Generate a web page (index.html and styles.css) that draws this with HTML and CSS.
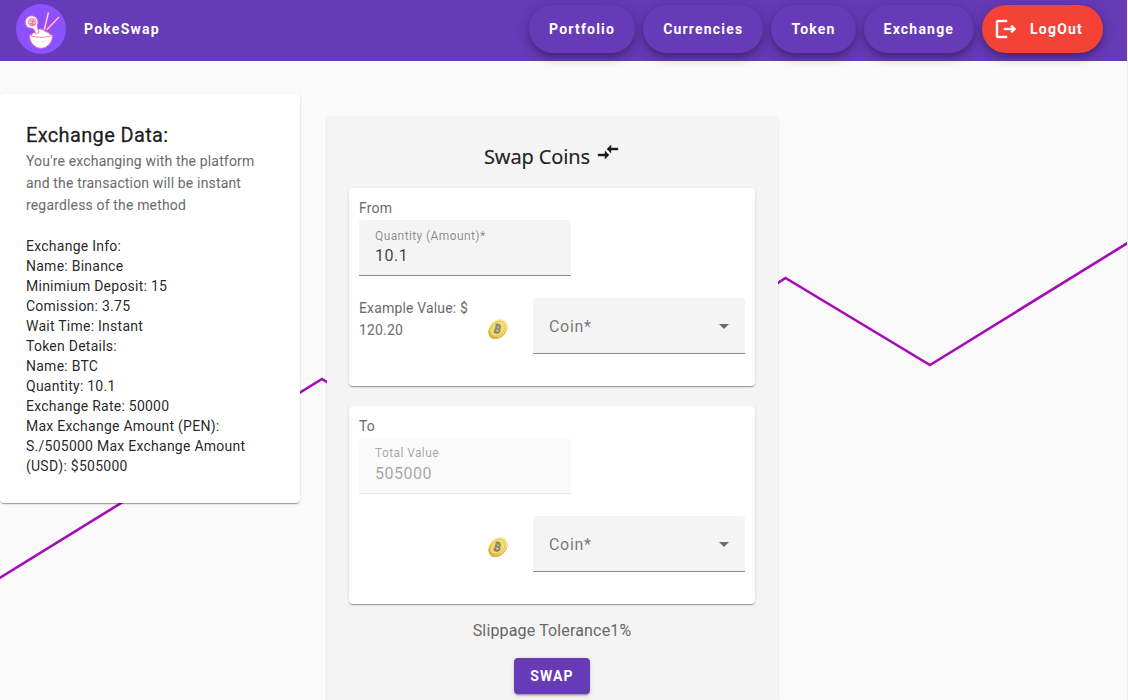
FILE: index.html
```
<!DOCTYPE html>
<html lang="en">
<head>
<meta charset="utf-8">
<title>PokeSwap</title>
<link rel="stylesheet" href="styles.css">
</head>
<body>
<svg class="backdrop" viewBox="0 0 1127 700" width="1127" height="700" aria-hidden="true">
  <path d="M-2 579 322 379 480 478 785.500 278 930 365 1130 241.500" fill="none" stroke="#a60bb8" stroke-width="2.6"/>
</svg>
<svg class="defs" width="0" height="0" aria-hidden="true">
  <defs>
    <linearGradient id="gold" x1="0" y1=".5" x2="1" y2=".5">
      <stop offset="0" stop-color="#dba83a"/><stop offset=".3" stop-color="#f0d05a"/><stop offset="1" stop-color="#f9eda6"/>
    </linearGradient>
    <symbol id="coin" viewBox="0 0 20 20">
      <g transform="rotate(-45 10 10)">
        <ellipse cx="9.600" cy="10.400" rx="10.800" ry="8" fill="#d6a342"/>
        <ellipse cx="10.200" cy="9.700" rx="10.800" ry="7.900" fill="url(#gold)"/>
        <ellipse cx="10.300" cy="9.700" rx="8.600" ry="6" fill="#f4dd70" stroke="#e3bd4b" stroke-width=".7"/>
      </g>
      <g transform="translate(-.5 0) rotate(16 10 10)" fill="none" stroke="#8c8778" stroke-width="2">
        <path d="M7 6.300h3.200a1.700 1.700 0 0 1 0 3.400H8.200h2.500a1.800 1.800 0 0 1 0 3.600H7M8.300 6v7.500M8.700 4.700v1.500M10.600 4.700v1.500M8.700 13.300v1.600M10.600 13.300v1.600"/>
      </g>
    </symbol>
  </defs>
</svg>

<header class="toolbar">
  <svg class="logo" viewBox="0 0 50 50" width="50" height="50" aria-hidden="true">
    <circle cx="25" cy="25" r="25" fill="#8c52ff"/>
    <g stroke="#ff62a5" stroke-width="2.100" stroke-linecap="round"><path d="M28.500 25 32.300 9M31 25.500 42.500 13.500"/></g>
    <g stroke="#fff" stroke-width=".9" stroke-linecap="round"><path d="M28.500 25 32.300 9M31 25.500 42.500 13.500"/></g>
    <g fill="#fff" stroke="#ff62a5" stroke-width=".8">
      <path d="M13.500 31h23c0 6-3 10-7 12.300-3 1.200-6 1.200-9 0C16.500 41 13.500 37 13.500 31z"/>
      <path d="M15 32q0-3 4-3.500 1-3.500 5-3.500 4 0 5 2.500 4 .5 4.500 2.500 2 .5 2 2-10 3-20.500 0z"/>
      <path d="M12.500 23.800a6.400 6.400 0 1 1 8.700-2.600q-.2 3 2 7l-3.200 1.800q-1.500-5.500-4-5.700z"/>
    </g>
    <path d="M14.500 36q10 3.500 21 0" fill="none" stroke="#ffc2dc" stroke-width=".4"/>
    <circle cx="16.200" cy="18.200" r="3.800" fill="#ffc2dc" stroke="#ff62a5" stroke-width=".8"/>
    <path d="M14.500 16.500q4 0 2 2t2 2M14 19l3 2M16 16l3 2" fill="none" stroke="#ee3d87" stroke-width=".7"/>
  </svg>
  <span class="brand">PokeSwap</span>
  <nav class="nav">
    <a class="fab">Portfolio</a>
    <a class="fab">Currencies</a>
    <a class="fab">Token</a>
    <a class="fab">Exchange</a>
    <a class="fab fab-warn">
      <svg viewBox="0 0 24 24" width="24" height="24" aria-hidden="true"><path fill="#fff" stroke="#fff" stroke-width=".4" d="m17 8-1.410 1.410L17.170 11H9v2h8.170l-1.580 1.580L17 16l4-4zM5 5h7V3H3c-1.100 0-2 .9-2 2v14c0 1.100.9 2 2 2h9v-2H3V5z" transform="translate(1 0)"/></svg>
      <span>LogOut</span>
    </a>
  </nav>
</header>

<main class="content">
  <section class="card info">
    <h2 class="title">Exchange Data:</h2>
    <p class="subtitle">You're exchanging with the platform and the transaction will be instant regardless of the method</p>
    <div class="details">
      <div>Exchange Info:</div>
      <div>Name: Binance</div>
      <div>Minimium Deposit: 15</div>
      <div>Comission: 3.75</div>
      <div>Wait Time: Instant</div>
      <div>Token Details:</div>
      <div>Name: BTC</div>
      <div>Quantity: 10.1</div>
      <div>Exchange Rate: 50000</div>
      <div>Max Exchange Amount (PEN): S./505000 Max Exchange Amount (USD): $505000</div>
    </div>
  </section>

  <section class="card swap">
    <h1 class="swap-title">Swap Coins
      <svg viewBox="0 0 24 24" width="24" height="24" aria-hidden="true"><path fill="#1d1d1d" stroke="#1d1d1d" stroke-width=".4" d="M9.010 14H2v2h7.010v3L13 15l-3.990-4zm5.980-1v-3H22V8h-7.010V5L11 9z"/></svg>
    </h1>

    <div class="card leg">
      <div class="subtitle">From</div>
      <div class="field">
        <span class="field-label">Quantity (Amount)*</span>
        <span class="field-value">10.1</span>
      </div>
      <div class="coin-row">
        <div class="subtitle example">Example Value: $ 120.20</div>
        <svg class="coin" width="20" height="20" aria-hidden="true"><use href="#coin"/></svg>
        <div class="field select"><span>Coin*</span><i class="caret"></i></div>
      </div>
    </div>

    <div class="card leg">
      <div class="subtitle">To</div>
      <div class="field disabled">
        <span class="field-label">Total Value</span>
        <span class="field-value">505000</span>
      </div>
      <div class="coin-row">
        <div class="subtitle example"></div>
        <svg class="coin" width="20" height="20" aria-hidden="true"><use href="#coin"/></svg>
        <div class="field select"><span>Coin*</span><i class="caret"></i></div>
      </div>
    </div>

    <div class="slippage">Slippage Tolerance1%</div>
    <button class="submit" type="button">SWAP</button>
  </section>
</main>
</body>
</html>
```
FILE: styles.css
```
* { box-sizing: border-box; }

body {
  width: 1128px;
  height: 700px;
  margin: 0;
  overflow: hidden;
  border-right: 1px solid #f0f0f0;
  background: #fafafa;
  color: rgba(0, 0, 0, .87);
  font-family: Roboto, "Helvetica Neue", sans-serif;
}

h1, h2, p { margin: 0; }

.backdrop { position: absolute; inset: 0; z-index: -1; }
.defs { position: absolute; }

.toolbar {
  display: flex;
  align-items: center;
  height: 61px;
  padding: 0 24px 3px 16px;
  background: #673ab7;
  color: #fff;
}

.logo { flex: none; }

.brand {
  margin-left: 18px;
  font-size: 14px;
  font-weight: 700;
  line-height: 18px;
  padding-bottom: 1px;
  letter-spacing: 1.23px;
}

.nav { display: flex; gap: 8px; margin-left: auto; }

.fab {
  display: flex;
  align-items: center;
  gap: 12px;
  height: 48px;
  padding: 0 20px;
  border-radius: 24px;
  background: #673ab7;
  box-shadow: 0 3px 5px -1px rgba(0, 0, 0, .2), 0 6px 10px rgba(0, 0, 0, .14), 0 1px 18px rgba(0, 0, 0, .12);
  font-size: 14px;
  font-weight: 700;
  letter-spacing: 1.2px;
}

.fab-warn { padding-left: 12px; background: #f44336; }

.content { display: flex; align-items: flex-start; gap: 27px; padding-top: 33px; }

.card {
  border-radius: 4px;
  background: #fff;
  box-shadow: 0 2px 1px -1px rgba(0, 0, 0, .2), 0 1px 1px rgba(0, 0, 0, .14), 0 1px 3px rgba(0, 0, 0, .12);
}

.info { width: 300px; height: 409px; padding: 25px 26px; }

.title {
  height: 31px;
  font-size: 20px;
  font-weight: 400;
  line-height: 32px;
  letter-spacing: .35px;
  -webkit-text-stroke: .3px;
}

.subtitle {
  color: rgba(0, 0, 0, .57);
  font-size: 14px;
  font-weight: 400;
  line-height: 22px;
  letter-spacing: .16px;
  -webkit-text-stroke: .15px;
}

.details {
  margin-top: 20px;
  font-size: 14px;
  line-height: 20px;
  letter-spacing: .25px;
}

.swap {
  display: flex;
  flex-direction: column;
  align-items: center;
  width: 451px;
  height: 583px;
  margin-top: 23px;
  padding: 24px 23px 0 22px;
  border-radius: 4px 4px 0 0;
  background: #f4f4f4;
}

.swap-title {
  display: flex;
  align-items: center;
  gap: 6px;
  height: 32px;
  margin-bottom: 15px;
  font: 400 20px/32px "Noto Sans", sans-serif;
  letter-spacing: -.12px;
  -webkit-text-stroke: .2px;
}

.swap-title svg { margin-bottom: 10px; }

.leg {
  width: 406px;
  height: 198px;
  margin-bottom: 20px;
  padding: 9px 10px;
}

.leg > .subtitle { height: 23px; }

.field {
  display: flex;
  flex-direction: column;
  width: 212px;
  height: 56px;
  padding: 8px 16px 0;
  border-bottom: 1px solid #8c8c8c;
  border-radius: 4px 4px 0 0;
  background: #f4f4f4;
  letter-spacing: .5px;
}

.field-label { color: rgba(0, 0, 0, .45); font-size: 12px; line-height: 16px; letter-spacing: .4px; }
.field-value { font-size: 16px; line-height: 24px; color: rgba(0, 0, 0, .75); }

.disabled { padding-top: 7px; background: #fafafa; border-bottom-color: #e6e6e6; }
.disabled .field-value { padding-top: 1px; }
.disabled .field-label, .disabled .field-value { color: rgba(0, 0, 0, .36); }

.coin-row { display: flex; margin-top: 22px; }
.example { width: 129px; margin-top: -1px; }
.coin { flex: none; margin: 21px 25px 0 0; }

.select {
  flex-direction: row;
  align-items: center;
  justify-content: space-between;
  padding-top: 2px;
  color: rgba(0, 0, 0, .54);
  font-size: 16px;
  letter-spacing: .7px;
}

.caret {
  border: 5px solid transparent;
  border-top-color: #6b6b6b;
  border-bottom: 0;
}

.slippage {
  margin: -3px 0 17px;
  color: rgba(0, 0, 0, .57);
  font-size: 16px;
  line-height: 20px;
  letter-spacing: .15px;
  -webkit-text-stroke: .15px;
}

.submit {
  height: 36px;
  padding: 0 16px;
  border: 0;
  border-radius: 4px;
  background: #673ab7;
  box-shadow: 0 3px 1px -2px rgba(0, 0, 0, .2), 0 2px 2px rgba(0, 0, 0, .14), 0 1px 5px rgba(0, 0, 0, .12);
  color: #fff;
  font: 700 14px/34px Roboto, sans-serif;
  letter-spacing: 1.1px;
}
```
